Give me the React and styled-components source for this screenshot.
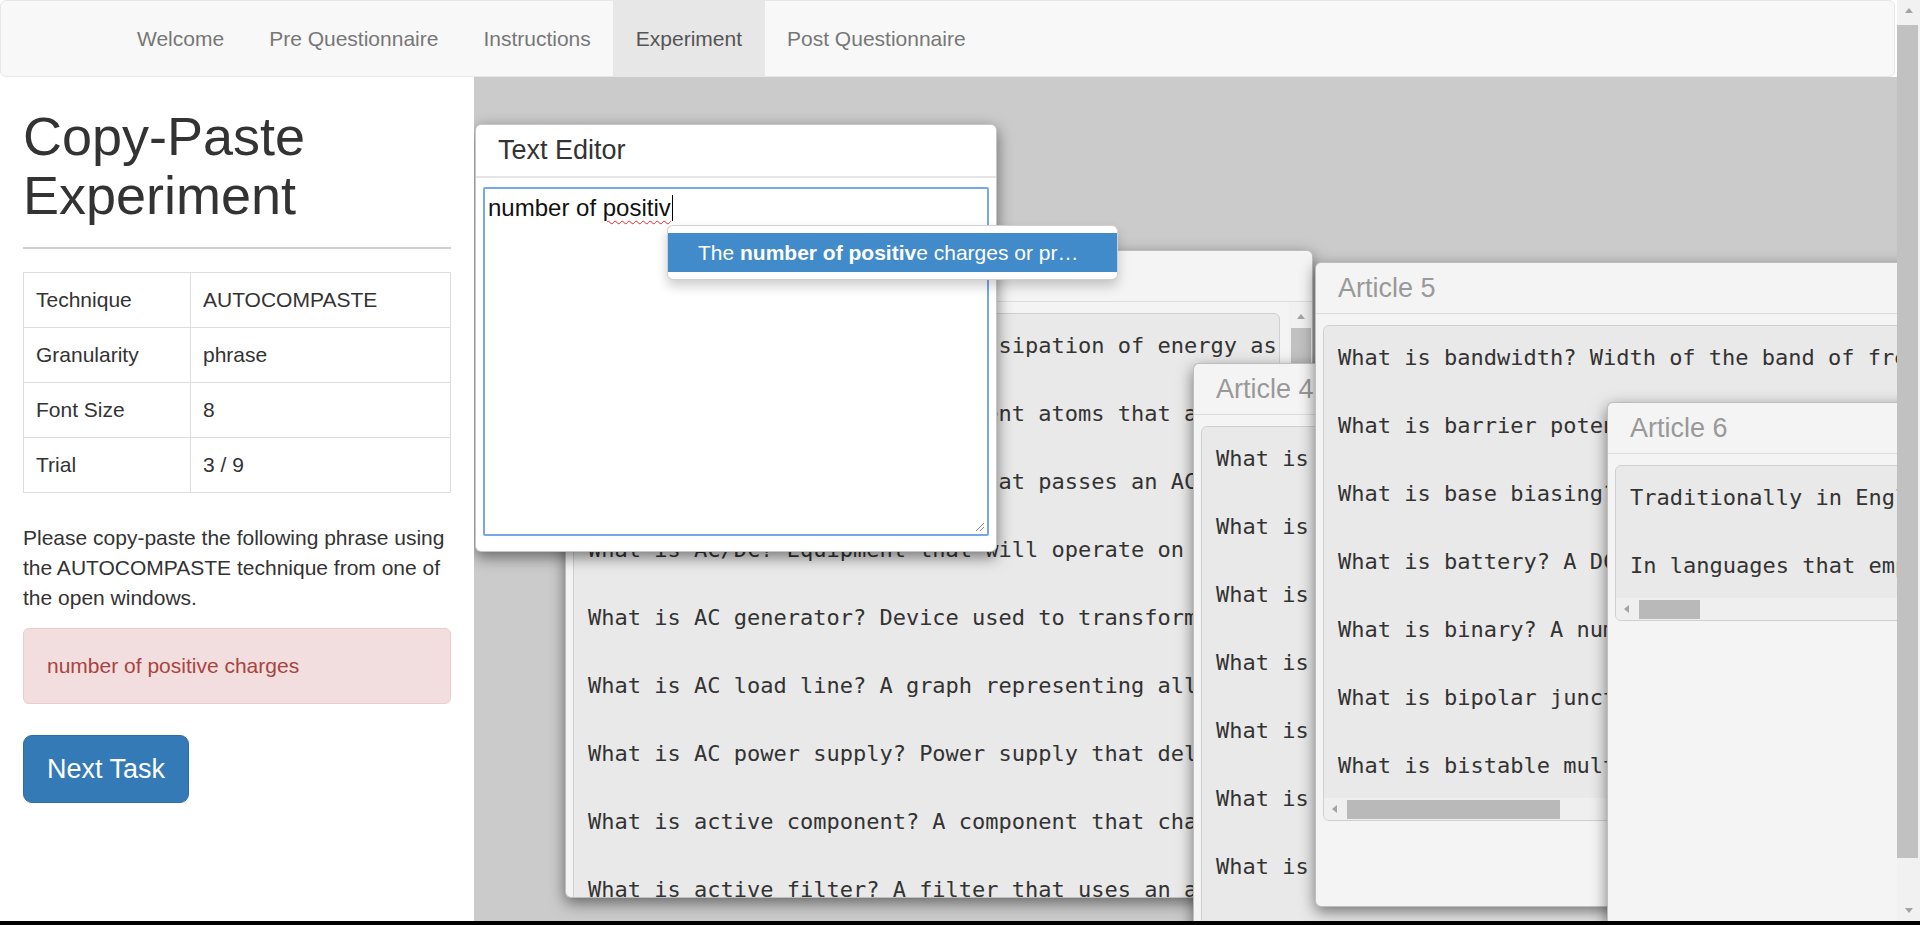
import React from 'react';
import styled, { createGlobalStyle } from 'styled-components';

const GlobalStyle = createGlobalStyle`
  html { background: #000; height: 925px; }
  body { margin: 0; background: #000; font-family: "Liberation Sans", Arial, sans-serif; }
  * { box-sizing: border-box; }
`;

const Screen = styled.div`
  display: flex;
  width: 1920px;
  height: 921px;
  background: #fff;
  overflow: hidden;
`;

const Page = styled.div`
  flex: 1;
  min-width: 0;
  display: flex;
  flex-direction: column;
`;

const Navbar = styled.nav`
  flex: none;
  height: 77px;
  margin-right: 2px;
  background: #f8f8f8;
  border: 1px solid #e7e7e7;
  border-radius: 6px;
`;

const NavList = styled.ul`
  display: flex;
  height: 100%;
  margin: 0;
  padding: 0 0 0 113.5px;
  list-style: none;
`;

const NavItem = styled.li`
  padding: 0 22.5px;
  line-height: 75px;
  font-size: 21px;
  color: ${(p) => (p.$active ? '#555' : '#777')};
  background: ${(p) => (p.$active ? '#e7e7e7' : 'transparent')};
`;

const Main = styled.div`
  flex: 1;
  display: flex;
  min-height: 0;
`;

const Sidebar = styled.aside`
  flex: none;
  width: 474px;
  padding: 0 23px;
  background: #fff;
  color: #333;
`;

const Title = styled.h1`
  margin: 30px 0 0;
  font-size: 54px;
  line-height: 59.4px;
  font-weight: 400;
`;

const Rule = styled.hr`
  margin: 21px 0 23px;
  border: 0;
  border-top: 2px solid #d0d0d0;
`;

const InfoTable = styled.table`
  width: 100%;
  margin-bottom: 30px;
  border-collapse: collapse;
  table-layout: fixed;
  font-size: 21px;
  line-height: 30px;
`;

const LabelCol = styled.col`
  width: 167px;
`;

const Cell = styled.td`
  padding: 12px;
  border: 1px solid #ddd;
`;

const Instructions = styled.p`
  margin: 0 0 15px;
  font-size: 21px;
  line-height: 30px;
`;

const Alert = styled.div`
  margin-bottom: 31px;
  padding: 22px 23px;
  background: #f2dede;
  border: 1px solid #ebccd1;
  border-radius: 6px;
  color: #a94442;
  font-size: 21px;
  line-height: 30px;
`;

const NextButton = styled.button`
  display: inline-block;
  padding: 15px 23px;
  background: #337ab7;
  border: 1px solid #2e6da4;
  border-radius: 9px;
  color: #fff;
  font-family: "Liberation Sans", Arial, sans-serif;
  font-size: 27px;
  line-height: 36px;
`;

const Desktop = styled.div`
  flex: 1;
  position: relative;
  overflow: hidden;
  background: #cbcbcb;
`;

const Win = styled.section`
  position: absolute;
  left: ${(p) => p.$x}px;
  top: ${(p) => p.$y}px;
  width: ${(p) => p.$w}px;
  height: ${(p) => p.$h}px;
  z-index: ${(p) => p.$z};
  display: flex;
  flex-direction: column;
  background: ${(p) => (p.$editor ? '#fff' : '#f4f4f4')};
  border: 1px solid rgba(0, 0, 0, 0.22);
  border-radius: 6px;
  box-shadow: 0 5px 15px rgba(0, 0, 0, 0.5);
  overflow: hidden;
`;

const WinHeader = styled.header`
  flex: none;
  display: flex;
  align-items: center;
  height: ${(p) => (p.$editor ? 53 : 51)}px;
  padding: 0 ${(p) => (p.$editor ? 22 : 22)}px;
  border-bottom: ${(p) => (p.$editor ? '2px solid #e5e5e5' : '1px solid #dcdcdc')};
  font-size: 27px;
  color: ${(p) => (p.$editor ? '#333' : '#999')};
`;

const WinBody = styled.div`
  flex: 1;
  min-height: 0;
  display: flex;
  align-items: flex-start;
  overflow: hidden;
`;

const PreBox = styled.div`
  flex: 1;
  min-width: 0;
  margin: 11px ${(p) => p.$mr}px 0 7px;
  background: #e9e9e9;
  border: 1px solid #cfcfcf;
  border-radius: 6px;
  overflow: hidden;
`;

const PreText = styled.pre`
  margin: 0;
  padding: 15px 14px 15px;
  overflow: hidden;
  white-space: pre;
  font-family: "DejaVu Sans Mono", "Liberation Mono", monospace;
  font-size: 22px;
  line-height: 34px;
  color: #333;
`;

const HScroll = styled.div`
  display: flex;
  align-items: center;
  height: 22px;
  padding-left: 8px;
  background: #efefef;
`;

const ArrowLeft = styled.span`
  width: 0;
  height: 0;
  border-top: 4px solid transparent;
  border-bottom: 4px solid transparent;
  border-right: 5px solid #a3a3a3;
`;

const HThumb = styled.span`
  width: ${(p) => p.$w}px;
  height: 19px;
  margin-left: 10px;
  background: #b9b9b9;
`;

const VScroll = styled.div`
  align-self: stretch;
  flex: none;
  width: 23px;
  display: flex;
  flex-direction: column;
  align-items: center;
  padding-top: 12px;
  background: #f1f1f1;
`;

const ArrowUp = styled.span`
  width: 0;
  height: 0;
  border-left: 4.5px solid transparent;
  border-right: 4.5px solid transparent;
  border-bottom: 5px solid #a3a3a3;
`;

const ArrowDown = styled.span`
  width: 0;
  height: 0;
  border-left: 4.5px solid transparent;
  border-right: 4.5px solid transparent;
  border-top: 5px solid #a3a3a3;
`;

const VThumb = styled.span`
  width: 20px;
  height: 240px;
  margin-top: 9px;
  background: #c1c1c1;
`;

const EditorBody = styled.div`
  flex: 1;
  display: flex;
  padding: 9px 7px 15px;
`;

const EditorArea = styled.div`
  position: relative;
  flex: 1;
  padding: 4px 3px;
  background: #fff;
  border: 2px solid #78a6ea;
  border-radius: 2px;
  font-size: 24px;
  line-height: 29px;
  color: #111;
`;

const Misspelled = styled.span`
  text-decoration: underline wavy #e22;
  text-decoration-thickness: 1px;
  text-underline-offset: 4px;
`;

const Caret = styled.span`
  display: inline-block;
  width: 1.5px;
  height: 26px;
  margin-left: 1px;
  vertical-align: -5px;
  background: #000;
`;

const Grip = styled.svg`
  position: absolute;
  right: 2px;
  bottom: 2px;
`;

const Suggest = styled.div`
  position: absolute;
  left: 193px;
  top: 148px;
  z-index: 10;
  width: 451px;
  padding: 7px 0;
  background: #fff;
  border: 1px solid rgba(0, 0, 0, 0.18);
  border-radius: 6px;
  box-shadow: 0 6px 12px rgba(0, 0, 0, 0.2);
`;

const SuggestItem = styled.div`
  height: 39px;
  padding-left: 30px;
  background: #428bca;
  color: #fff;
  font-size: 21px;
  line-height: 39px;
  white-space: nowrap;
`;

const PageScroll = styled.div`
  flex: none;
  width: 23px;
  display: flex;
  flex-direction: column;
  align-items: center;
  padding: 8px 0 8px;
  background: #f1f1f1;
`;

const PageThumb = styled.span`
  align-self: flex-start;
  width: 21px;
  height: 833px;
  margin: 12px 0 0;
  background: #c1c1c1;
`;

const Spacer = styled.span`
  flex: 1;
`;

const articleA = [
  'What is absorption? Loss or dissipation of energy as heat within a medium.',
  'What is acceptor atoms? Trivalent atoms that accept electrons from the lattice.',
  'What is AC ammeter? A device that passes an AC current through a measuring coil.',
  'What is AC/DC? Equipment that will operate on either an AC or a DC power source.',
  'What is AC generator? Device used to transform mechanical energy into AC power.',
  'What is AC load line? A graph representing all possible values of current and voltage.',
  'What is AC power supply? Power supply that delivers an alternating output voltage.',
  'What is active component? A component that changes the basic character of a signal.',
  'What is active filter? A filter that uses an amplifier along with passive elements.',
  'What is admittance? A measure of how easily a circuit will allow a current to flow.',
];

const article4 = [
  'What is alternating current? Current that periodically reverses its direction.',
  'What is ammeter? An instrument used to measure the current in a circuit.',
  'What is ampere? The unit of electric current in the SI system.',
  'What is amplifier? A device that increases the power of a signal.',
  'What is amplitude? The maximum value of a periodically varying quantity.',
  'What is analog? A signal that varies continuously over a range of values.',
  'What is anode? The electrode through which conventional current flows in.',
  'What is antenna? A device that radiates or receives electromagnetic waves.',
];

const article5 = [
  'What is bandwidth? Width of the band of frequencies passed by a circuit.',
  'What is barrier potential? The voltage across the depletion region of a junction.',
  'What is base biasing? A method of biasing a transistor through the base resistor.',
  'What is battery? A DC voltage source made of two or more cells.',
  'What is binary? A number system that uses only the digits 0 and 1.',
  'What is bipolar junction transistor? A transistor made of three doped regions.',
  'What is bistable multivibrator? A circuit with two stable output states.',
];

const article6 = [
  'Traditionally in English-language typesetting, a wider space was used between sentences.',
  'In languages that employ the Latin alphabet, sentence spacing conventions vary.',
];

const navItems = ['Welcome', 'Pre Questionnaire', 'Instructions', 'Experiment', 'Post Questionnaire'];

const details = [
  ['Technique', 'AUTOCOMPASTE'],
  ['Granularity', 'phrase'],
  ['Font Size', '8'],
  ['Trial', '3 / 9'],
];

function ArticleWindow({ title, lines, x, y, w, h, z, thumb, vscroll }) {
  return (
    <Win $x={x} $y={y} $w={w} $h={h} $z={z}>
      <WinHeader>{title}</WinHeader>
      <WinBody>
        <PreBox $mr={vscroll ? 9 : 7}>
          <PreText>{lines.join('\n\n')}</PreText>
          {thumb ? (
            <HScroll>
              <ArrowLeft />
              <HThumb $w={thumb} />
            </HScroll>
          ) : null}
        </PreBox>
        {vscroll ? (
          <VScroll>
            <ArrowUp />
            <VThumb />
          </VScroll>
        ) : null}
      </WinBody>
    </Win>
  );
}

export default function App() {
  return (
    <>
      <GlobalStyle />
      <Screen>
        <Page>
          <Navbar>
            <NavList>
              {navItems.map((item) => (
                <NavItem key={item} $active={item === 'Experiment'}>
                  {item}
                </NavItem>
              ))}
            </NavList>
          </Navbar>
          <Main>
            <Sidebar>
              <Title>
                Copy-Paste
                <br />
                Experiment
              </Title>
              <Rule />
              <InfoTable>
                <colgroup>
                  <LabelCol />
                  <col />
                </colgroup>
                <tbody>
                  {details.map(([k, v]) => (
                    <tr key={k}>
                      <Cell>{k}</Cell>
                      <Cell>{v}</Cell>
                    </tr>
                  ))}
                </tbody>
              </InfoTable>
              <Instructions>
                Please copy-paste the following phrase using the AUTOCOMPASTE technique from one of the open windows.
              </Instructions>
              <Alert>number of positive charges</Alert>
              <NextButton type="button">Next Task</NextButton>
            </Sidebar>
            <Desktop>
              <ArticleWindow title="Article 3" lines={articleA} x={91} y={173} w={748} h={648} z={1} vscroll />
              <ArticleWindow title="Article 4" lines={article4} x={719} y={286} w={746} h={700} z={2} />
              <ArticleWindow title="Article 5" lines={article5} x={841} y={185} w={746} h={645} z={3} thumb={213} />
              <ArticleWindow title="Article 6" lines={article6} x={1133} y={325} w={746} h={700} z={4} thumb={61} />
              <Win $x={1} $y={47} $w={522} $h={428} $z={5} $editor>
                <WinHeader $editor>Text Editor</WinHeader>
                <EditorBody>
                  <EditorArea>
                    number of <Misspelled>positiv</Misspelled>
                    <Caret />
                    <Grip width="10" height="10" viewBox="0 0 10 10">
                      <path d="M9 1 L1 9 M9 5 L5 9" stroke="#888" strokeWidth="1" fill="none" />
                    </Grip>
                  </EditorArea>
                </EditorBody>
              </Win>
              <Suggest>
                <SuggestItem>
                  The <b>number of positiv</b>e charges or pr…
                </SuggestItem>
              </Suggest>
            </Desktop>
          </Main>
        </Page>
        <PageScroll>
          <ArrowUp />
          <PageThumb />
          <Spacer />
          <ArrowDown />
        </PageScroll>
      </Screen>
    </>
  );
}
